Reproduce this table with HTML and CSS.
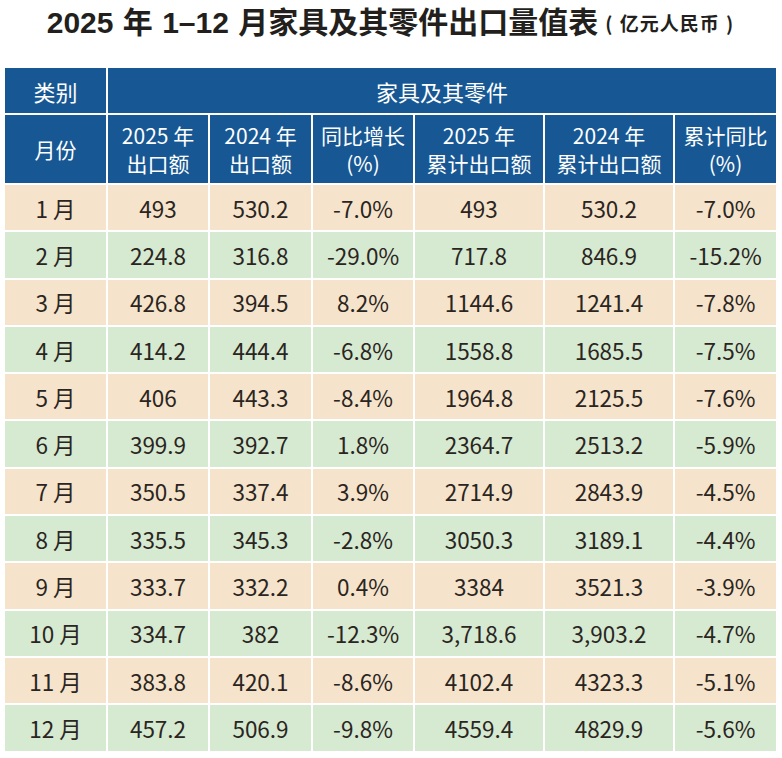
FILE: index.html
```html
<!DOCTYPE html>
<html lang="zh">
<head>
<meta charset="utf-8">
<link rel="stylesheet" href="styles.css">
</head>
<body>
<h1 class="title">2025 年 1–12 月家具及其零件出口量值表<span class="unit">( 亿元人民币 )</span></h1>
<table class="data">
  <colgroup>
    <col class="c1"><col class="c2"><col class="c3"><col class="c4"><col class="c5"><col class="c6"><col class="c7">
  </colgroup>
  <thead>
    <tr class="h1"><th>类别</th><th colspan="6">家具及其零件</th></tr>
    <tr class="h2"><th>月份</th><th>2025 年<br>出口额</th><th>2024 年<br>出口额</th><th>同比增长<br>(%)</th><th>2025 年<br>累计出口额</th><th>2024 年<br>累计出口额</th><th>累计同比<br>(%)</th></tr>
  </thead>
  <tbody>
    <tr class="odd"><td>1 月</td><td>493</td><td>530.2</td><td>-7.0%</td><td>493</td><td>530.2</td><td>-7.0%</td></tr>
    <tr class="even"><td>2 月</td><td>224.8</td><td>316.8</td><td>-29.0%</td><td>717.8</td><td>846.9</td><td>-15.2%</td></tr>
    <tr class="odd"><td>3 月</td><td>426.8</td><td>394.5</td><td>8.2%</td><td>1144.6</td><td>1241.4</td><td>-7.8%</td></tr>
    <tr class="even"><td>4 月</td><td>414.2</td><td>444.4</td><td>-6.8%</td><td>1558.8</td><td>1685.5</td><td>-7.5%</td></tr>
    <tr class="odd"><td>5 月</td><td>406</td><td>443.3</td><td>-8.4%</td><td>1964.8</td><td>2125.5</td><td>-7.6%</td></tr>
    <tr class="even"><td>6 月</td><td>399.9</td><td>392.7</td><td>1.8%</td><td>2364.7</td><td>2513.2</td><td>-5.9%</td></tr>
    <tr class="odd"><td>7 月</td><td>350.5</td><td>337.4</td><td>3.9%</td><td>2714.9</td><td>2843.9</td><td>-4.5%</td></tr>
    <tr class="even"><td>8 月</td><td>335.5</td><td>345.3</td><td>-2.8%</td><td>3050.3</td><td>3189.1</td><td>-4.4%</td></tr>
    <tr class="odd"><td>9 月</td><td>333.7</td><td>332.2</td><td>0.4%</td><td>3384</td><td>3521.3</td><td>-3.9%</td></tr>
    <tr class="even"><td>10 月</td><td>334.7</td><td>382</td><td>-12.3%</td><td>3,718.6</td><td>3,903.2</td><td>-4.7%</td></tr>
    <tr class="odd"><td>11 月</td><td>383.8</td><td>420.1</td><td>-8.6%</td><td>4102.4</td><td>4323.3</td><td>-5.1%</td></tr>
    <tr class="even"><td>12 月</td><td>457.2</td><td>506.9</td><td>-9.8%</td><td>4559.4</td><td>4829.9</td><td>-5.6%</td></tr>
  </tbody>
</table>
</body>
</html>
```

FILE: styles.css
```css
html, body {
  margin: 0;
  padding: 0;
  background: #ffffff;
}
body {
  padding: 0 6px 0 5px;
  font-family: "Noto Sans CJK SC", "Noto Sans", sans-serif;
}
.title {
  margin: 0;
  height: 68px;
  padding-top: 4px;
  padding-left: 0;
  box-sizing: border-box;
  text-align: center;
  font-family: "Liberation Sans", "Noto Sans CJK SC", sans-serif;
  font-weight: bold;
  font-size: 30px;
  line-height: 38px;
  color: #231f1d;
  word-spacing: 1px;
}
.unit {
  margin-left: 7px;
  font-size: 19px;
  letter-spacing: 1px;
  font-weight: bold;
  font-family: "Noto Sans CJK SC", sans-serif;
  vertical-align: 2px;
}
.data {
  width: 771px;
  border-collapse: collapse;
  table-layout: fixed;
}
.c1 { width: 102px; }
.c2 { width: 102px; }
.c3 { width: 103px; }
.c4 { width: 102px; }
.c5 { width: 130px; }
.c6 { width: 130px; }
.c7 { width: 102px; }
.data th, .data td {
  border: 2px solid #ffffff;
  text-align: center;
  padding: 0;
}
.data tr:first-child th { border-top: none; }
.data th:first-child, .data td:first-child { border-left: none; }
.data th:last-child, .data td:last-child { border-right: none; }
.data th {
  background: #175894;
  color: #ffffff;
  font-weight: normal;
  font-size: 21px;
  line-height: 28px;
}
.h1 th { height: 45px; font-size: 22px; }
.h2 th { height: 68px; }
.data td {
  height: 45.3px;
  font-size: 22.5px;
  color: #2a2521;
}
.odd td { background: #f5e3cb; }
.even td { background: #d6e9d1; }
.data tbody tr:last-child td { border-bottom: none; }
```
